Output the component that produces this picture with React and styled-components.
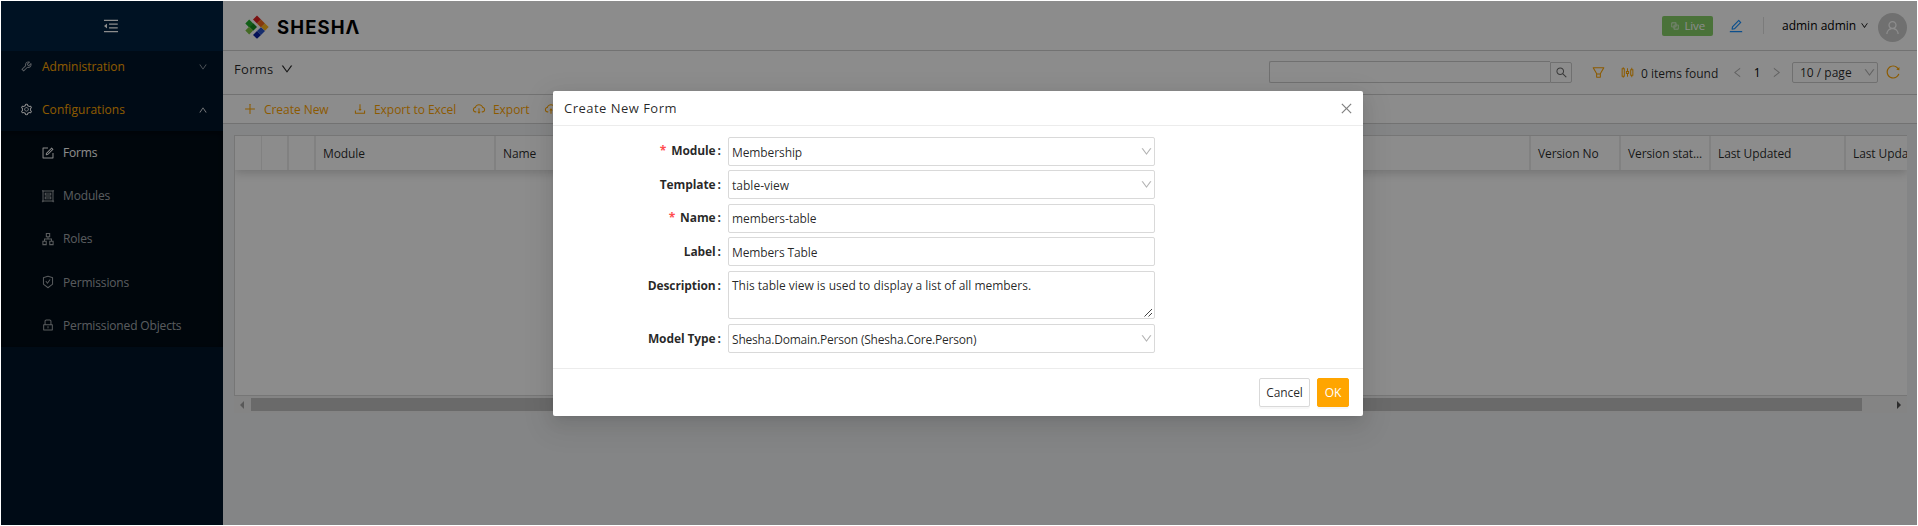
import React from "react";
import styled, { createGlobalStyle } from "styled-components";
import {
  AiOutlineMenuFold, AiOutlineTool, AiOutlineSetting, AiOutlineForm, AiOutlineGroup,
  AiOutlineApartment, AiOutlineSafetyCertificate, AiOutlineLock, AiOutlineDown, AiOutlineUp,
  AiOutlinePlus, AiOutlineDownload, AiOutlineCloudDownload, AiOutlineCloudUpload,
  AiOutlineSearch, AiOutlineFilter, AiOutlineSliders, AiOutlineLeft, AiOutlineRight,
  AiOutlineReload, AiOutlineUser, AiOutlineBlock, AiOutlineEdit, AiOutlineClose,
} from "react-icons/ai";

const GlobalStyle = createGlobalStyle`
  * { box-sizing: border-box; }
  body {
    margin: 0;
    background: #fff;
    font-family: "Open Sans", "Noto Sans", sans-serif;
    font-size: 12px;
    letter-spacing: -0.15px;
    color: rgba(0, 0, 0, 0.85);
    overflow: hidden;
  }
  svg { display: block; flex: none; }
`;

const Page = styled.div`
  position: relative;
  width: 1916px;
  height: 524px;
  margin: 1px;
  display: flex;
  overflow: hidden;
  background: #f0f2f5;
`;

/* Sidebar */
const Sider = styled.aside`
  width: 222px;
  flex: none;
  background: #001529;
  color: rgba(255, 255, 255, 0.65);
`;
const Trigger = styled.div`
  height: 50px;
  display: flex;
  align-items: center;
  justify-content: center;
  padding-right: 3px;
  background: #002140;
  color: #fff;
`;
const GroupRow = styled.div`
  height: ${(p) => p.$h}px;
  padding: ${(p) => (p.$open ? 6 : 0)}px 15px 0 19px;
  display: flex;
  align-items: center;
  color: ${(p) => (p.$open ? "#fff" : "rgba(255,255,255,.65)")};
  > span {
    flex: 1;
    margin-left: 9px;
    color: #ffa500;
    letter-spacing: ${(p) => p.$ls}px;
  }
`;
const SubMenu = styled.div`
  height: 216px;
  background: #000c17;
  box-shadow: inset 0 2px 7px rgba(0, 0, 0, 0.45);
`;
const SubItem = styled.div`
  height: 43.2px;
  padding-left: 40px;
  display: flex;
  align-items: center;
  gap: 8px;
  color: ${(p) => (p.$active ? "#fff" : "rgba(255,255,255,.65)")};
`;

/* Main area */
const Main = styled.main`
  flex: 1;
  min-width: 0;
  display: flex;
  flex-direction: column;
`;
const TopBar = styled.header`
  height: 50px;
  display: flex;
  align-items: center;
  padding: 0 10px 0 22px;
  background: #fff;
  border-bottom: 1px solid #d0d0d0;
`;
const Brand = styled.div`
  display: flex;
  align-items: center;
  gap: 8px;
  margin-top: 3px;
  flex: 1;
  font: 700 18.5px/24px "Inter", sans-serif;
  letter-spacing: 1.1px;
  color: #000;
`;
const LiveTag = styled.div`
  width: 51px;
  height: 20px;
  padding: 0 8px 0 8px;
  display: flex;
  align-items: center;
  justify-content: space-between;
  border-radius: 2px;
  background: #87d068;
  color: #fff;
  font-size: 11.5px;
`;
const EditLink = styled.div`
  margin-left: 15px;
  color: #1890ff;
`;
const Divider = styled.div`
  width: 1px;
  height: 17px;
  margin: 0 18px 0 19px;
  background: #e0e0e0;
`;
const UserName = styled.div`
  display: flex;
  align-items: center;
  gap: 4px;
  width: 96px;
  color: #000;
  letter-spacing: 0;
`;
const Avatar = styled.div`
  width: 29px;
  height: 29px;
  margin-top: 4px;
  border-radius: 50%;
  display: flex;
  align-items: center;
  justify-content: center;
  background: #ccc;
  color: #fff;
`;
const ToolRow = styled.div`
  height: 44px;
  display: flex;
  align-items: flex-start;
  padding: 10px 16px 0 11px;
  background: #fff;
  border-bottom: 1px solid #d0d0d0;
`;
const Heading = styled.div`
  flex: 1;
  height: 16px;
  display: flex;
  align-items: center;
  gap: 6px;
  font-size: 13px;
  font-weight: 500;
  letter-spacing: 0.3px;
`;
const SearchBox = styled.div`
  display: flex;
  align-items: flex-start;
`;
const SearchInput = styled.div`
  width: 281px;
  height: 22px;
  border: 1px solid #ccc;
  border-right: 0;
  border-radius: 2px 0 0 2px;
`;
const SearchButton = styled.div`
  width: 22px;
  height: 21px;
  margin-top: 1px;
  display: flex;
  align-items: center;
  justify-content: center;
  border: 1px solid #ccc;
  border-radius: 0 2px 2px 0;
  color: rgba(0, 0, 0, 0.6);
`;
const TableTools = styled.div`
  height: 22px;
  display: flex;
  align-items: center;
  margin-left: 19px;
  color: #ffa500;
`;
const ColumnsIcon = styled(AiOutlineSliders)`
  margin-left: 14px;
`;
const Count = styled.span`
  width: 92px;
  margin: 2px 0 0 6px;
  color: rgba(0, 0, 0, 0.85);
  letter-spacing: 0;
`;
const Pager = styled.div`
  width: 60px;
  margin-left: -2px;
  display: flex;
  align-items: center;
  justify-content: space-between;
  padding: 0 8px 0 0;
  color: rgba(0, 0, 0, 0.3);
  b { font-weight: 400; color: #000; }
`;
const PageSize = styled.div`
  width: 86px;
  height: 21px;
  margin: 1px 7px 0 1px;
  padding: 0 1px 0 7px;
  display: flex;
  align-items: center;
  justify-content: space-between;
  border: 1px solid #ccc;
  border-radius: 2px;
  color: rgba(0, 0, 0, 0.85);
  letter-spacing: 0;
  svg { color: rgba(0, 0, 0, 0.3); }
`;
const Actions = styled.div`
  height: 29px;
  display: flex;
  align-items: center;
  padding-left: 20px;
  background: #fff;
  border-bottom: 1px solid #d0d0d0;
`;
const Action = styled.div`
  width: ${(p) => p.$w}px;
  display: flex;
  align-items: center;
  gap: 7px;
  color: #ffa500;
  letter-spacing: -0.05px;
`;

/* Table */
const Table = styled.div`
  height: 261px;
  margin: 11px 10px 0 11px;
  border: 1px solid #d8d8d8;
  border-right: 0;
  background: #fff;
  overflow: hidden;
`;
const HeadRow = styled.div`
  height: 34px;
  display: flex;
  box-shadow: 0 3px 9px rgba(0, 0, 0, 0.18);
`;
const HeadCell = styled.div`
  flex: none;
  width: ${(p) => p.$w}px;
  padding-left: 7px;
  display: flex;
  align-items: center;
  white-space: nowrap;
  border-right: ${(p) => (p.$thin ? 1 : 2)}px solid #ececec;
  letter-spacing: -0.1px;
`;
const ScrollBar = styled.div`
  height: 17px;
  margin: 0 10px 0 11px;
  padding: 0 6px 0 6px;
  display: flex;
  align-items: center;
  background: #f1f1f1;
`;
const Thumb = styled.div`
  width: 1611px;
  height: 13px;
  margin-left: 7px;
  background: #c1c1c1;
`;
const Arrow = styled.div`
  border: 4px solid transparent;
  ${(p) => (p.$right
    ? "border-left-color:#505050;border-right:0;margin-left:auto;"
    : "border-right-color:#a3a3a3;border-left:0;")}
`;

/* Modal */
const Mask = styled.div`
  position: absolute;
  inset: 0;
  padding-top: 90px;
  padding-left: 552px;
  background: rgba(0, 0, 0, 0.45);
`;
const Dialog = styled.section`
  width: 810px;
  height: 325px;
  border-radius: 2px;
  background: #fff;
  display: flex;
  flex-direction: column;
  box-shadow: 0 3px 6px -4px rgba(0,0,0,.12), 0 6px 16px rgba(0,0,0,.08), 0 9px 28px 8px rgba(0,0,0,.06);
`;
const DialogHead = styled.div`
  height: 35px;
  padding: 0 9px 0 11px;
  display: flex;
  align-items: center;
  justify-content: space-between;
  border-bottom: 1px solid #ececec;
  font-size: 13px;
  font-weight: 500;
  letter-spacing: 0.48px;
  svg { color: rgba(0, 0, 0, 0.5); }
`;
const Form = styled.div`
  flex: 1;
  padding-top: 11px;
`;
const Row = styled.div`
  display: flex;
  margin-bottom: ${(p) => p.$gap}px;
`;
const Label = styled.label`
  width: 168px;
  height: 29px;
  line-height: ${(p) => (p.$low ? 30 : 28)}px;
  text-align: right;
  font-weight: 700;
  letter-spacing: ${(p) => p.$ls}px;
  i {
    margin-right: 5px;
    font-style: normal;
    color: #ff4d4f;
  }
  &::after {
    content: ":";
    margin-left: 2px;
    letter-spacing: 0;
  }
`;
const Control = styled.div`
  width: 427px;
  height: ${(p) => (p.$tall ? 48 : 29)}px;
  margin-left: 7px;
  padding: 0 1px 0 3px;
  display: flex;
  align-items: ${(p) => (p.$tall ? "flex-end" : "center")};
  justify-content: space-between;
  border: 1px solid #d9d9d9;
  border-radius: 2px;
  letter-spacing: ${(p) => p.$ls}px;
  span {
    align-self: flex-start;
    line-height: ${(p) => (p.$low ? 29 : 27)}px;
  }
  svg { color: rgba(0, 0, 0, 0.3); }
`;
const DialogFoot = styled.div`
  height: 48px;
  padding: 9px 14px 0 0;
  display: flex;
  justify-content: flex-end;
  gap: 7px;
  border-top: 1px solid #ececec;
`;
const Button = styled.button`
  width: ${(p) => (p.$primary ? 32 : 51)}px;
  height: 29px;
  padding: 0;
  border: 1px solid ${(p) => (p.$primary ? "#ffa500" : "#d9d9d9")};
  border-radius: 2px;
  background: ${(p) => (p.$primary ? "#ffa500" : "#fff")};
  color: ${(p) => (p.$primary ? "#fff" : "rgba(0,0,0,.85)")};
  font: inherit;
  letter-spacing: -0.1px;
  box-shadow: 0 2px 0 rgba(0, 0, 0, 0.03);
`;

const Logo = () => (
  <svg width="24" height="24" viewBox="0 0 24 24">
    <path d="M12 0.5 16 4.5 12 8.5 8 4.5z" fill="#e02020" />
    <path d="M16 4.5 20 8.5 16 12.5 12 8.5z" fill="#f26a1b" />
    <path d="M20 8.5 23.7 12 20 15.8 16.2 12z" fill="#ffb81c" />
    <path d="M16 12.2 20 16 16 20 12 16z" fill="#2a55c8" />
    <path d="M12 16 16 20 12 23.8 8 20z" fill="#0a1fa0" />
    <path d="M4.2 4.5 8.2 8.5 4.2 12.5 0.3 8.5z" fill="#1fae2a" />
    <path d="M8.2 8.2 12 12 8.2 15.8 4.4 12z" fill="#118a1c" />
    <path d="M4.2 11.8 8.2 15.6 4.2 19.5 0.3 15.6z" fill="#7cc242" />
  </svg>
);

const Grip = () => (
  <svg width="9" height="10" viewBox="0 0 9 10">
    <path d="M0.5 8.5 8 1M4.5 8.5 8 5" stroke="#444" fill="none" />
  </svg>
);

const subItems = [
  ["Forms", AiOutlineForm],
  ["Modules", AiOutlineGroup],
  ["Roles", AiOutlineApartment],
  ["Permissions", AiOutlineSafetyCertificate],
  ["Permissioned Objects", AiOutlineLock],
];

const columns = [
  ["", 27, true], ["", 27], ["", 27], ["Module", 180], ["Name", 1035],
  ["Version No", 90], ["Version stat...", 90], ["Last Updated", 135], ["Last Updated By", 135],
];

const fields = [
  { label: "Module", value: "Membership", required: true, drop: true, low: true, gap: 4, ls: -0.1 },
  { label: "Template", value: "table-view", drop: true, low: true, gap: 5, ls: 0.02 },
  { label: "Name", value: "members-table", required: true, gap: 4, ls: -0.1 },
  { label: "Label", value: "Members Table", low: true, gap: 5, ls: -0.12 },
  { label: "Description", value: "This table view is used to display a list of all members.", tall: true, gap: 5, ls: -0.02 },
  { label: "Model Type", value: "Shesha.Domain.Person (Shesha.Core.Person)", drop: true, low: true, gap: 0, ls: -0.2 },
];

export default function App() {
  return (
    <>
      <GlobalStyle />
      <Page>
        <Sider>
          <Trigger><AiOutlineMenuFold size={18} /></Trigger>
          <GroupRow $h={31} $ls={0}>
            <AiOutlineTool size={13} /><span>Administration</span><AiOutlineDown size={10} />
          </GroupRow>
          <GroupRow $h={49} $ls={0.05} $open>
            <AiOutlineSetting size={13} /><span>Configurations</span><AiOutlineUp size={10} />
          </GroupRow>
          <SubMenu>
            {subItems.map(([name, Icon], i) => (
              <SubItem key={name} $active={i === 0}><Icon size={14} />{name}</SubItem>
            ))}
          </SubMenu>
        </Sider>
        <Main>
          <TopBar>
            <Brand><Logo />SHESHΛ</Brand>
            <LiveTag><AiOutlineBlock size={10} />Live</LiveTag>
            <EditLink><AiOutlineEdit size={16} /></EditLink>
            <Divider />
            <UserName>admin admin<AiOutlineDown size={9} /></UserName>
            <Avatar><AiOutlineUser size={17} /></Avatar>
          </TopBar>
          <ToolRow>
            <Heading>Forms<AiOutlineDown size={14} /></Heading>
            <SearchBox>
              <SearchInput />
              <SearchButton><AiOutlineSearch size={13} /></SearchButton>
            </SearchBox>
            <TableTools>
              <AiOutlineFilter size={15} />
              <ColumnsIcon size={15} />
              <Count>0 items found</Count>
              <Pager><AiOutlineLeft size={13} /><b>1</b><AiOutlineRight size={13} /></Pager>
              <PageSize>10 / page<AiOutlineDown size={13} /></PageSize>
              <AiOutlineReload size={16} />
            </TableTools>
          </ToolRow>
          <Actions>
            <Action $w={110}><AiOutlinePlus size={14} />Create New</Action>
            <Action $w={119}><AiOutlineDownload size={14} />Export to Excel</Action>
            <Action $w={72}><AiOutlineCloudDownload size={14} />Export</Action>
            <Action $w={80}><AiOutlineCloudUpload size={14} /></Action>
          </Actions>
          <Table>
            <HeadRow>
              {columns.map(([name, w, thin], i) => (
                <HeadCell key={i} $w={w} $thin={thin}>{name}</HeadCell>
              ))}
            </HeadRow>
          </Table>
          <ScrollBar><Arrow /><Thumb /><Arrow $right /></ScrollBar>
        </Main>
        <Mask>
          <Dialog>
            <DialogHead>Create New Form<AiOutlineClose size={15} /></DialogHead>
            <Form>
              {fields.map((f) => (
                <Row key={f.label} $gap={f.gap}>
                  <Label $ls={-0.1} $low={f.label !== "Module" && f.label !== "Name"}>
                    {f.required && <i>*</i>}{f.label}
                  </Label>
                  <Control $tall={f.tall} $low={f.low} $ls={f.ls}>
                    <span>{f.value}</span>
                    {f.drop && <AiOutlineDown size={13} />}
                    {f.tall && <Grip />}
                  </Control>
                </Row>
              ))}
            </Form>
            <DialogFoot>
              <Button>Cancel</Button>
              <Button $primary>OK</Button>
            </DialogFoot>
          </Dialog>
        </Mask>
      </Page>
    </>
  );
}
